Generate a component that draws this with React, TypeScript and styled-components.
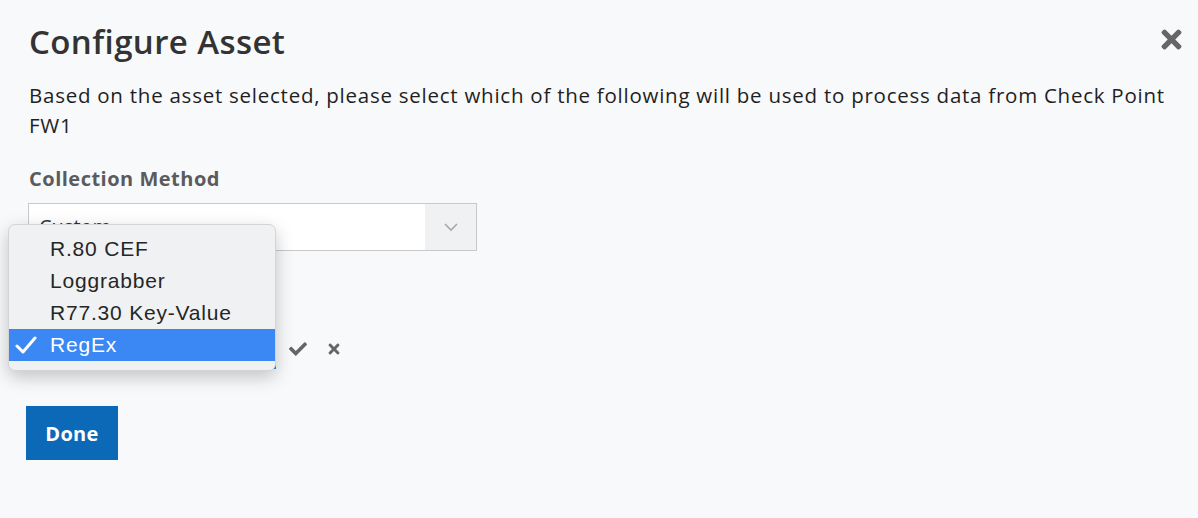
import React from "react";
import styled, { createGlobalStyle } from "styled-components";
import { FaCheck, FaTimes } from "react-icons/fa";

const GlobalStyle = createGlobalStyle`
  * {
    padding: 0;
    margin: 0;
    box-sizing: border-box;
  }

  body {
    font-family: "Open Sans", "Noto Sans", sans-serif;
    background-color: #f8f9fb;
    color: #222;
    overflow: hidden;
  }

  button,
  input,
  select {
    border: none;
    outline: none;
    font-family: inherit;
  }

  button {
    cursor: pointer;
  }
`;

const Page = styled.div`
  position: relative;
  width: 1198px;
  height: 518px;
  padding: 20px 12px 0 29px;
`;

const Header = styled.div`
  display: flex;
  justify-content: space-between;
  align-items: flex-start;
`;

const Title = styled.h1`
  font-size: 33px;
  font-weight: 600;
  color: #333;
  letter-spacing: 0.4px;
  line-height: 44px;
`;

const CloseButton = styled.button`
  display: flex;
  background: transparent;
  color: #666;
  margin-top: 5px;
  padding: 0;
`;

const Description = styled.p`
  margin-top: 16px;
  font-size: 20.5px;
  letter-spacing: 0.75px;
  line-height: 30px;
  color: #1f1f1f;
  width: 1150px;
`;

const Field = styled.div`
  display: flex;
  flex-direction: column;
  margin-top: 26px;
`;

const Label = styled.label`
  font-size: 20px;
  font-weight: 700;
  letter-spacing: 0.5px;
  color: #5a5b5e;
  line-height: 26px;
`;

const SelectBox = styled.div`
  display: flex;
  margin-top: 11px;
  width: 449px;
  height: 48px;
  border: 1px solid #c9c9cc;
  background: #fff;
  margin-left: -1px;
`;

const SelectValue = styled.div`
  flex: 1;
  padding: 0 10px;
  font-size: 20px;
  line-height: 46px;
  color: #333;
`;

const Chevron = styled.div`
  width: 51px;
  display: flex;
  align-items: center;
  justify-content: center;
  background: #f0f1f3;
  color: #a9a9ad;
`;

const InputRow = styled.div`
  display: flex;
  align-items: center;
  margin-top: 78px;
`;

const TextInput = styled.input`
  width: 248px;
  height: 40px;
  border: 1px solid #2f86e6;
  border-bottom: 3px solid #2f86e6;
  background: #fff;
  margin-left: -1px;
  margin-right: 13px;
`;

const IconButton = styled.button`
  display: flex;
  background: transparent;
  color: #666;
  padding: 0;
  margin-right: 19px;
`;

const DoneButton = styled.button`
  margin-top: 37px;
  margin-left: -3px;
  width: 92px;
  height: 54px;
  background: #0b69b7;
  color: #fff;
  font-size: 20px;
  font-weight: 700;
  letter-spacing: 0.3px;
`;

const Menu = styled.ul`
  position: absolute;
  left: 8px;
  top: 224px;
  width: 268px;
  padding: 8px 0 9px;
  background: #f0f1f2;
  border: 1px solid #d4d4d6;
  border-radius: 7px;
  box-shadow: 0 6px 18px rgba(0, 0, 0, 0.22);
  list-style: none;
  font-family: "Liberation Sans", Arial, sans-serif;
`;

const MenuItem = styled.li<{ $active?: boolean }>`
  position: relative;
  height: 32px;
  padding-left: 41px;
  font-size: 21px;
  letter-spacing: 0.8px;
  line-height: 32px;
  color: ${(p) => (p.$active ? "#fff" : "#262626")};
  background: ${(p) => (p.$active ? "#3b87f4" : "transparent")};
`;

const Tick = styled.svg`
  position: absolute;
  left: 6px;
  top: 7px;
`;

const options = ["R.80 CEF", "Loggrabber", "R77.30 Key-Value", "RegEx"];

export default function App() {
  const selected = "RegEx";

  return (
    <Page>
      <GlobalStyle />
      <Header>
        <Title>Configure Asset</Title>
        <CloseButton aria-label="Close">
          <FaTimes size={29} />
        </CloseButton>
      </Header>
      <Description>
        Based on the asset selected, please select which of the following will be used to process
        data from Check Point FW1
      </Description>

      <Field>
        <Label>Collection Method</Label>
        <SelectBox>
          <SelectValue>Custom</SelectValue>
          <Chevron>
            <svg width="16" height="10" viewBox="0 0 16 10">
              <polyline points="2,2 8,8 14,2" fill="none" stroke="currentColor" strokeWidth="1.6" />
            </svg>
          </Chevron>
        </SelectBox>
      </Field>

      <InputRow>
        <TextInput />
        <IconButton aria-label="Save">
          <FaCheck size={18} />
        </IconButton>
        <IconButton aria-label="Cancel">
          <FaTimes size={16} />
        </IconButton>
      </InputRow>

      <DoneButton>Done</DoneButton>

      <Menu>
        {options.map((o) => (
          <MenuItem key={o} $active={o === selected}>
            {o === selected && (
              <Tick width="22" height="18" viewBox="0 0 22 18">
                <polyline
                  points="2,10 8,16 20,2"
                  fill="none"
                  stroke="#fff"
                  strokeWidth="3"
                  strokeLinecap="round"
                  strokeLinejoin="round"
                />
              </Tick>
            )}
            {o}
          </MenuItem>
        ))}
      </Menu>
    </Page>
  );
}
